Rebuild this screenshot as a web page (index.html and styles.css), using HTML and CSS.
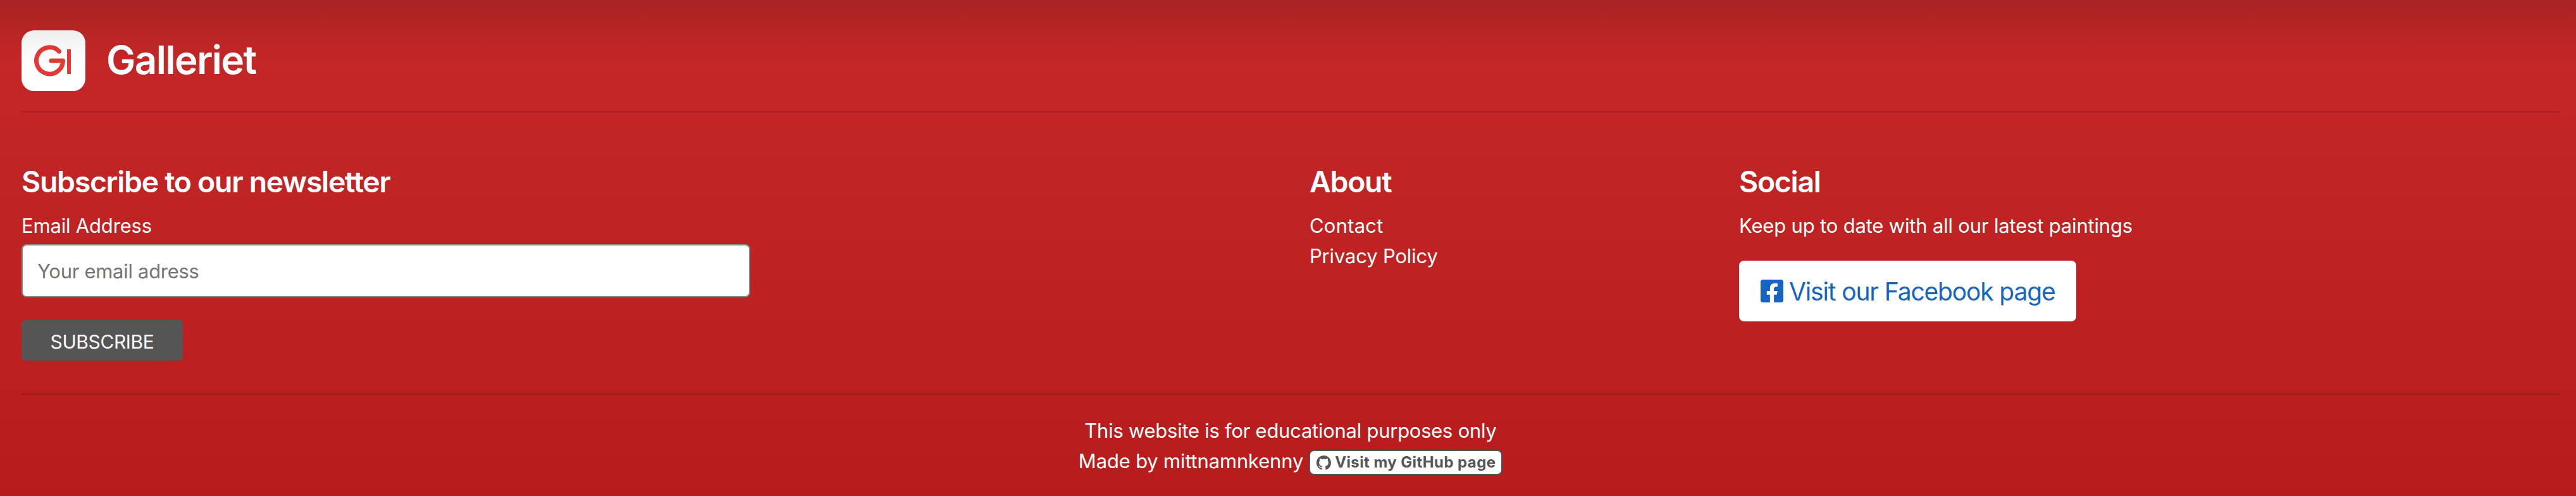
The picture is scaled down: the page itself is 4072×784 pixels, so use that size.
FILE: index.html
```
<!DOCTYPE html>
<html lang="en">
<head>
<meta charset="utf-8">
<title>Galleriet</title>
<link rel="stylesheet" href="styles.css">
</head>
<body>
<footer class="footer">
  <div class="brand">
    <svg class="brand-logo" viewBox="0 0 101 96" aria-hidden="true">
      <rect width="101" height="96" rx="20" fill="#fff"/>
      <path d="M59.500 33.200A21 21 0 1 0 65.500 48H47" fill="none" stroke="#e53935" stroke-width="7" stroke-linecap="round" stroke-linejoin="round"/>
      <path d="M72 30h6v39h-6z" fill="#e53935"/>
    </svg>
    <span class="brand-name">Galleriet</span>
  </div>
  <div class="columns">
    <form class="newsletter">
      <h2 class="heading">Subscribe to our newsletter</h2>
      <label class="label" for="email">Email Address</label>
      <input class="input" id="email" type="email" placeholder="Your email adress">
      <button class="subscribe" type="button">SUBSCRIBE</button>
    </form>
    <nav class="about">
      <h2 class="heading">About</h2>
      <a class="link contact">Contact</a>
      <a class="link">Privacy Policy</a>
    </nav>
    <section class="social">
      <h2 class="heading">Social</h2>
      <p class="text">Keep up to date with all our latest paintings</p>
      <a class="facebook">
        <svg class="facebook-icon" viewBox="0 32 448 448" aria-hidden="true"><path fill="currentColor" d="M400 32H48A48 48 0 0 0 0 80v352a48 48 0 0 0 48 48h137.250V327.690h-63V256h63v-54.640c0-62.150 37-96.480 93.670-96.480 27.140 0 55.520 4.840 55.520 4.840v61h-31.270c-30.810 0-40.420 19.120-40.420 38.730V256h68.780l-11 71.690h-57.780V480H400a48 48 0 0 0 48-48V80a48 48 0 0 0-48-48z"/></svg>
        <span class="facebook-label">Visit our Facebook page</span>
      </a>
    </section>
  </div>
  <div class="legal">
    <p class="text notice">This website is for educational purposes only</p>
    <p class="text made">
      <span>Made by mittnamnkenny</span>
      <a class="github">
        <svg class="github-icon" viewBox="0 0 16 16" aria-hidden="true"><path fill="currentColor" d="M8 0C3.580 0 0 3.580 0 8c0 3.540 2.290 6.530 5.470 7.590.4.070.55-.17.55-.38 0-.19-.01-.82-.01-1.490-2.010.37-2.530-.49-2.690-.94-.09-.23-.48-.94-.82-1.130-.28-.15-.68-.52-.01-.53.63-.01 1.080.58 1.230.82.72 1.210 1.870.87 2.330.66.07-.52.28-.87.51-1.070-1.780-.2-3.640-.89-3.640-3.950 0-.87.31-1.590.82-2.150-.08-.2-.36-1.020.08-2.120 0 0 .67-.21 2.200.82.64-.18 1.320-.27 2-.27s1.360.09 2 .27c1.530-1.040 2.200-.82 2.200-.82.44 1.100.16 1.920.08 2.120.51.56.82 1.270.82 2.150 0 3.070-1.870 3.750-3.650 3.950.29.25.54.73.54 1.480 0 1.070-.01 1.930-.01 2.200 0 .21.15.46.55.38A8.010 8.010 0 0 0 16 8c0-4.420-3.580-8-8-8z"/></svg>
        <span>Visit my GitHub page</span>
      </a>
    </p>
  </div>
</footer>
</body>
</html>
```
FILE: styles.css
```
* { box-sizing: border-box; }

body {
  margin: 0;
  font-family: Inter, "Liberation Sans", sans-serif;
  font-size: 31px;
  line-height: 48px;
  letter-spacing: -.18px;
  color: #fff;
}

.footer {
  position: relative;
  height: 784px;
  padding: 0 26px 0 34px;
  background: linear-gradient(#c62828, #b71c1c);
}

/* soft shadow cast by the section above */
.footer::after {
  content: "";
  position: absolute;
  inset: 0 0 auto;
  height: 120px;
  background: linear-gradient(rgba(0, 0, 0, .137), rgba(0, 0, 0, .117) 20px, rgba(0, 0, 0, .07) 48px, rgba(0, 0, 0, .03) 72px, rgba(0, 0, 0, .008) 96px, transparent);
  pointer-events: none;
}

.brand {
  display: flex;
  align-items: center;
  gap: 33px;
  height: 178px;
  border-bottom: 2px solid rgba(0, 0, 0, .13);
}
.brand-logo { width: 101px; height: 96px; margin-top: 16px; }
.brand-name {
  margin-top: 13px;
  font-size: 62px;
  font-weight: 600;
  line-height: 96px;
  letter-spacing: -1.6px;
}

.columns {
  display: grid;
  grid-template-columns: 2036px 679px 1fr;
  height: 446px;
  padding-top: 77px;
  border-bottom: 2px solid rgba(0, 0, 0, .13);
}
.newsletter, .about, .social {
  display: flex;
  flex-direction: column;
  align-items: flex-start;
}
.heading {
  margin: 0 0 14px;
  font-size: 46.5px;
  font-weight: 600;
  line-height: 64px;
  letter-spacing: -1.35px;
}
.text { margin: 0; }
.contact { letter-spacing: .2px; }

.input {
  width: 1152px;
  height: 84px;
  margin: 5px 0 36px;
  padding: 0 23px;
  border: 2px solid #8a8a8a;
  border-radius: 8px;
  background: #fff;
  font: inherit;
  letter-spacing: -.3px;
}
.input::placeholder { color: #757575; opacity: 1; }

.subscribe {
  width: 255px;
  height: 64px;
  padding: 4px 0 0;
  border: 0;
  border-radius: 6px;
  background: #555;
  color: #fff;
  font: inherit;
  font-size: 30px;
  letter-spacing: -.4px;
}

.facebook {
  display: flex;
  align-items: center;
  gap: 9px;
  width: 533px;
  height: 96px;
  margin-top: 31px;
  padding-left: 34px;
  border-radius: 8px;
  background: #fff;
  color: #1565c0;
  font-size: 39px;
  letter-spacing: -1.15px;
  white-space: nowrap;
}
.facebook-icon { width: 36px; height: 36px; }
.facebook-label { padding-top: 2px; }

.legal { padding-top: 33px; text-align: center; }
.notice { letter-spacing: -.26px; }
.made {
  display: flex;
  justify-content: center;
  align-items: flex-start;
  gap: 9px;
}
.github {
  display: flex;
  align-items: center;
  gap: 6px;
  width: 306px;
  height: 40px;
  margin-top: 6px;
  padding-left: 10px;
  border: 2px solid #555;
  border-radius: 8px;
  background: #fff;
  color: #555;
  font-size: 24px;
  font-weight: 700;
  line-height: 36px;
  letter-spacing: .4px;
  white-space: nowrap;
}
.github-icon { width: 23px; height: 23px; }
```
